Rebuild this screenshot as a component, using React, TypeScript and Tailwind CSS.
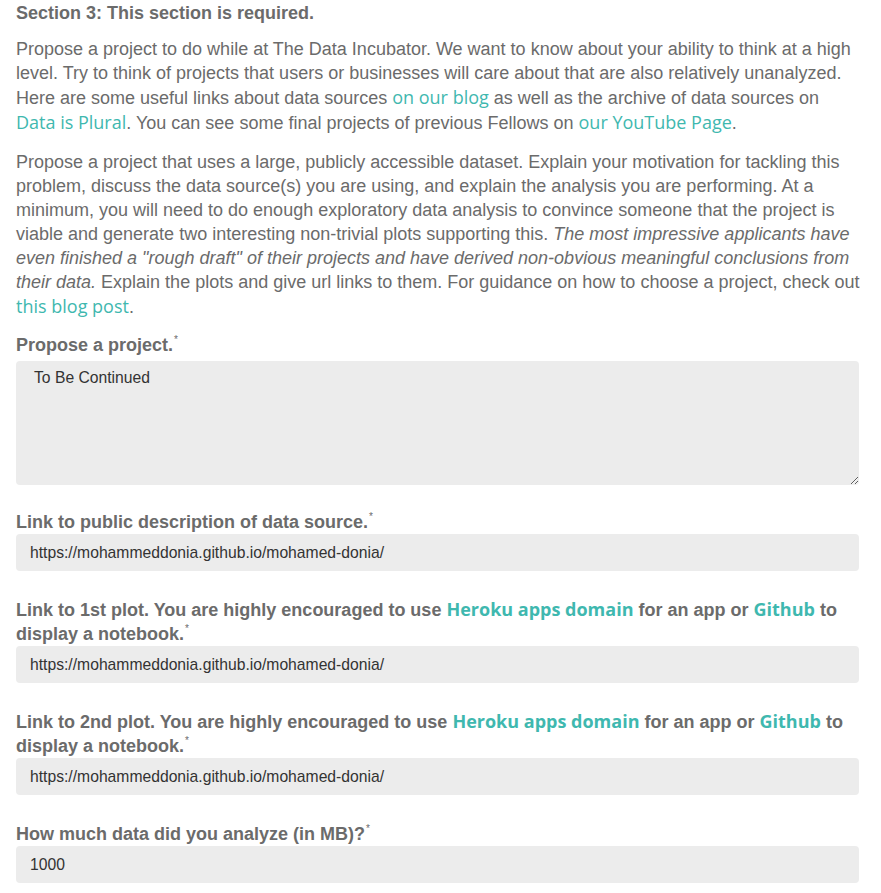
import React from "react";

const A = ({ children }: { children: React.ReactNode }) => (
  <a href="#" className="text-[#3fb8af] font-['Open_Sans',sans-serif]">
    {children}
  </a>
);

const B = ({ children }: { children: React.ReactNode }) => (
  <a href="#" className="text-[#3fb8af] font-['Open_Sans',sans-serif] font-bold leading-5">
    {children}
  </a>
);

const Req = () => <span className="text-[10px] font-normal relative top-[-8px] ml-px leading-none">*</span>;

const Label = ({ children }: { children: React.ReactNode }) => (
  <label className="block font-bold text-[18px] leading-6">{children}</label>
);

const Field = ({ value }: { value: string }) => (
  <input
    readOnly
    value={value}
    className="block w-full h-[37px] rounded bg-[#ececec] px-[14px] text-[15.7px] text-[#333] outline-none font-['Liberation_Sans',Arial,sans-serif]"
  />
);

export default function App() {
  return (
    <div className="bg-white min-h-screen px-4 pt-0 pb-4 text-[#6b6b6b] font-['Liberation_Sans',Arial,sans-serif] text-[18px] leading-6 w-[875px]">
      <h3 className="font-bold text-[18px] leading-6 pt-px">Section 3: This section is required.</h3>
      <p className="mt-3">
        Propose a project to do while at The Data Incubator. We want to know about your ability to think at a high
        level. Try to think of projects that users or businesses will care about that are also relatively unanalyzed.
        Here are some useful links about data sources <A>on our blog</A> as well as the archive of data sources on{" "}
        <A>Data is Plural</A>. You can see some final projects of previous Fellows on <A>our YouTube Page</A>.
      </p>
      <p className="mt-[15px] mr-[-6px]">
        Propose a project that uses a large, publicly accessible dataset. Explain your motivation for tackling this
        problem, discuss the data source(s) you are using, and explain the analysis you are performing. At a
        minimum, you will need to do enough exploratory data analysis to convince someone that the project is
        viable and generate two interesting non-trivial plots supporting this.{" "}
        <em>
          The most impressive applicants have even finished a "rough draft" of their projects and have derived
          non-obvious meaningful conclusions from their data.
        </em>{" "}
        Explain the plots and give url links to them. For guidance on how to choose a project, check out{" "}
        <A>this blog post</A>.
      </p>

      <div className="mt-[14px]">
        <Label>
          Propose a project.<Req />
        </Label>
        <textarea
          readOnly
          value="To Be Continued"
          className="block mt-[4px] w-full h-[124px] rounded bg-[#ececec] px-[18px] py-[5px] text-[15.7px] leading-6 text-[#333] outline-none resize-y font-['Liberation_Sans',Arial,sans-serif]"
        />
      </div>

      <div className="mt-[25px]">
        <Label>
          Link to public description of data source.<Req />
        </Label>
        <Field value="https://mohammeddonia.github.io/mohamed-donia/" />
      </div>

      <div className="mt-[27px]">
        <Label>
          Link to 1st plot. You are highly encouraged to use <B>Heroku apps domain</B> for an app or <B>Github</B> to
          display a notebook.<Req />
        </Label>
        <Field value="https://mohammeddonia.github.io/mohamed-donia/" />
      </div>

      <div className="mt-[27px]">
        <Label>
          Link to 2nd plot. You are highly encouraged to use <B>Heroku apps domain</B> for an app or <B>Github</B> to
          display a notebook.<Req />
        </Label>
        <Field value="https://mohammeddonia.github.io/mohamed-donia/" />
      </div>

      <div className="mt-[27px]">
        <Label>
          How much data did you analyze (in MB)?<Req />
        </Label>
        <Field value="1000" />
      </div>
    </div>
  );
}
